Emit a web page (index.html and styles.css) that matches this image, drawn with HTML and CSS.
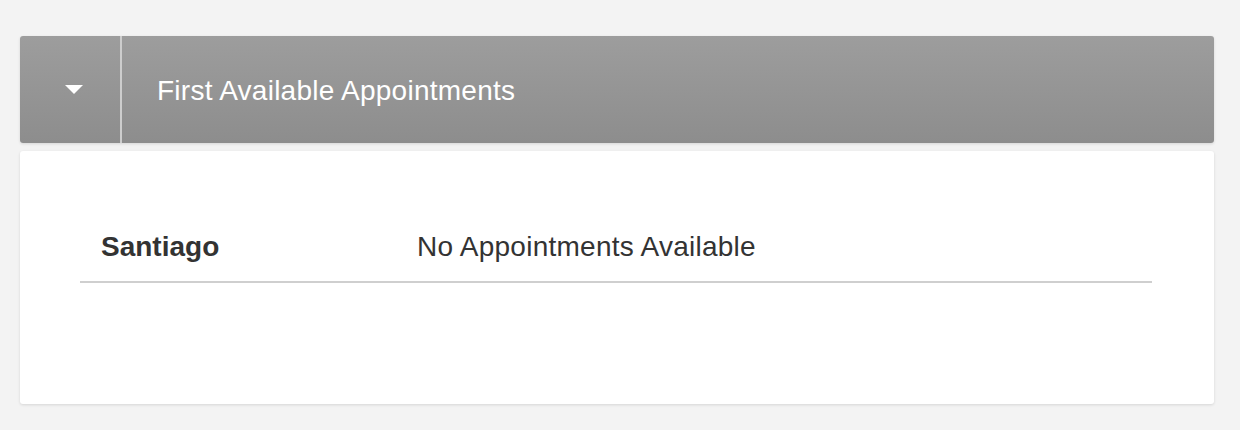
FILE: index.html
```html
<!DOCTYPE html>
<html lang="en">
<head>
  <meta charset="UTF-8">
  <meta name="viewport" content="width=device-width, initial-scale=1.0">
  <title>First Available Appointments</title>
  <link rel="stylesheet" href="styles.css">
</head>
<body>
  <div class="panel">
    <div class="panel-header">
      <button class="toggle" aria-label="Collapse">
        <span class="caret"></span>
      </button>
      <h2 class="panel-title">First Available Appointments</h2>
    </div>

    <div class="panel-body">
      <div class="appt-row">
        <div class="appt-location">Santiago</div>
        <div class="appt-status">No Appointments Available</div>
      </div>
    </div>
  </div>
</body>
</html>
```

FILE: styles.css
```css
body {
  margin: 0;
  padding: 36px 26px 26px 20px;
  background-color: #f3f3f3;
  font-family: "Liberation Sans", Arial, Helvetica, sans-serif;
  color: #333;
}
.panel {
  display: flex;
  flex-direction: column;
  gap: 8px;
}
.panel-header {
  display: flex;
  align-items: stretch;
  height: 107px;
  background: linear-gradient(to bottom, #9d9d9d, #8d8d8d);
  border-radius: 3px;
  box-shadow: 0 1px 3px rgba(0,0,0,0.12);
}
.toggle {
  box-sizing: border-box;
  width: 102px;
  border: none;
  border-right: 2px solid #cdcdcd;
  background: transparent;
  padding: 0 0 0 8px;
  display: flex;
  align-items: center;
  justify-content: center;
  cursor: pointer;
}
.caret {
  width: 0;
  height: 0;
  border-left: 9px solid transparent;
  border-right: 9px solid transparent;
  border-top: 9px solid #fff;
  margin-top: -1px;
}
.panel-title {
  margin: 0;
  padding: 3px 0 0 35px;
  display: flex;
  align-items: center;
  font-size: 28px;
  font-weight: normal;
  letter-spacing: 0.25px;
  color: #fff;
}
.panel-body {
  background-color: #fff;
  border-radius: 3px;
  padding: 60px 62px 121px 60px;
  box-shadow: 0 1px 3px rgba(0,0,0,0.12);
}
.appt-row {
  display: flex;
  align-items: center;
  padding: 20px 0 18px 21px;
  line-height: 32px;
  font-size: 28px;
  border-bottom: 2px solid #cfcfcf;
}
.appt-location {
  width: 316px;
  font-weight: bold;
}
.appt-status {
  flex: 1;
  letter-spacing: 0.25px;
}
```
